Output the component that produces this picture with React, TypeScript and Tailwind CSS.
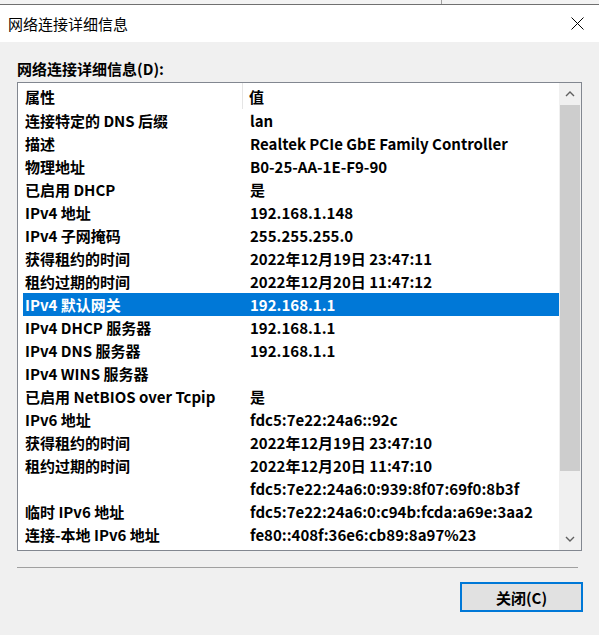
const ROWS: [string, string][] = [
  ["连接特定的 DNS 后缀", "lan"],
  ["描述", "Realtek PCIe GbE Family Controller"],
  ["物理地址", "B0-25-AA-1E-F9-90"],
  ["已启用 DHCP", "是"],
  ["IPv4 地址", "192.168.1.148"],
  ["IPv4 子网掩码", "255.255.255.0"],
  ["获得租约的时间", "2022年12月19日 23:47:11"],
  ["租约过期的时间", "2022年12月20日 11:47:12"],
  ["IPv4 默认网关", "192.168.1.1"],
  ["IPv4 DHCP 服务器", "192.168.1.1"],
  ["IPv4 DNS 服务器", "192.168.1.1"],
  ["IPv4 WINS 服务器", ""],
  ["已启用 NetBIOS over Tcpip", "是"],
  ["IPv6 地址", "fdc5:7e22:24a6::92c"],
  ["获得租约的时间", "2022年12月19日 23:47:10"],
  ["租约过期的时间", "2022年12月20日 11:47:10"],
  ["", "fdc5:7e22:24a6:0:939:8f07:69f0:8b3f"],
  ["临时 IPv6 地址", "fdc5:7e22:24a6:0:c94b:fcda:a69e:3aa2"],
  ["连接-本地 IPv6 地址", "fe80::408f:36e6:cb89:8a97%23"],
];

const SELECTED = 8;

function Chevron({ up }: { up?: boolean }) {
  return (
    <svg width="10" height="6" viewBox="0 0 10 6" className={up ? "" : "rotate-180"}>
      <path d="M1 5 L5 1 L9 5" fill="none" stroke="#606060" strokeWidth="1.4" />
    </svg>
  );
}

export default function App() {
  return (
    <div className="w-[599px] h-[635px] flex flex-col bg-[#f0f0f0] text-black font-['Noto_Sans_CJK_SC',sans-serif] overflow-hidden">
      {/* window behind */}
      <div className="relative h-[5px] bg-[#f3f3f3] border-b border-[#707070] shrink-0">
        <div className="absolute left-[441px] top-0 h-[4px] w-px bg-[#a0a0a0]" />
      </div>

      {/* title bar */}
      <div className="h-[37px] bg-white flex items-center justify-between pl-[8px] pr-[15px] shrink-0">
        <span className="text-[15px] leading-none">网络连接详细信息</span>
        <svg width="13" height="13" viewBox="0 0 13 13">
          <path d="M0.5 0.5 L12.5 12.5 M12.5 0.5 L0.5 12.5" stroke="#000" strokeWidth="1" />
        </svg>
      </div>

      <div className="flex-1 flex flex-col px-[17px]">
        <div className="pt-[17px] h-[40px] text-[15px] font-bold leading-[20px]">网络连接详细信息(D):</div>

        {/* list box */}
        <div className="h-[469px] border border-[#828790] bg-white flex">
          <div className="flex-1 flex flex-col text-[15px] font-bold leading-[23px]">
            <div className="h-[26px] flex items-center">
              <div className="w-[225px] pl-[7px] h-full flex items-center border-r border-[#e5e5e5]">属性</div>
              <div className="pl-[6px]">值</div>
            </div>
            {ROWS.map(([k, v], i) => (
              <div
                key={i}
                className={`h-[23px] ml-[5px] flex items-center whitespace-nowrap ${i === SELECTED ? "bg-[#0078d7] text-white" : ""}`}
              >
                <div className="w-[227px] pl-[2px]">{k}</div>
                <div>{v}</div>
              </div>
            ))}
          </div>

          {/* scrollbar */}
          <div className="w-[22px] bg-[#f0f0f0] flex flex-col">
            <div className="h-[22px] flex items-center justify-center">
              <Chevron up />
            </div>
            <div className="h-[366px] mx-[1px] bg-[#cdcdcd]" />
            <div className="flex-1" />
            <div className="h-[22px] flex items-center justify-center">
              <Chevron />
            </div>
          </div>
        </div>

        <div className="mt-[16px] mr-[4px] h-px bg-[#a0a0a0]" />

        <div className="flex justify-end mt-[14px] mr-[-1px]">
          <button className="w-[123px] h-[30px] bg-[#e1e1e1] border-2 border-[#0078d7] text-[15px] font-bold leading-none">
            关闭(C)
          </button>
        </div>
      </div>
    </div>
  );
}
